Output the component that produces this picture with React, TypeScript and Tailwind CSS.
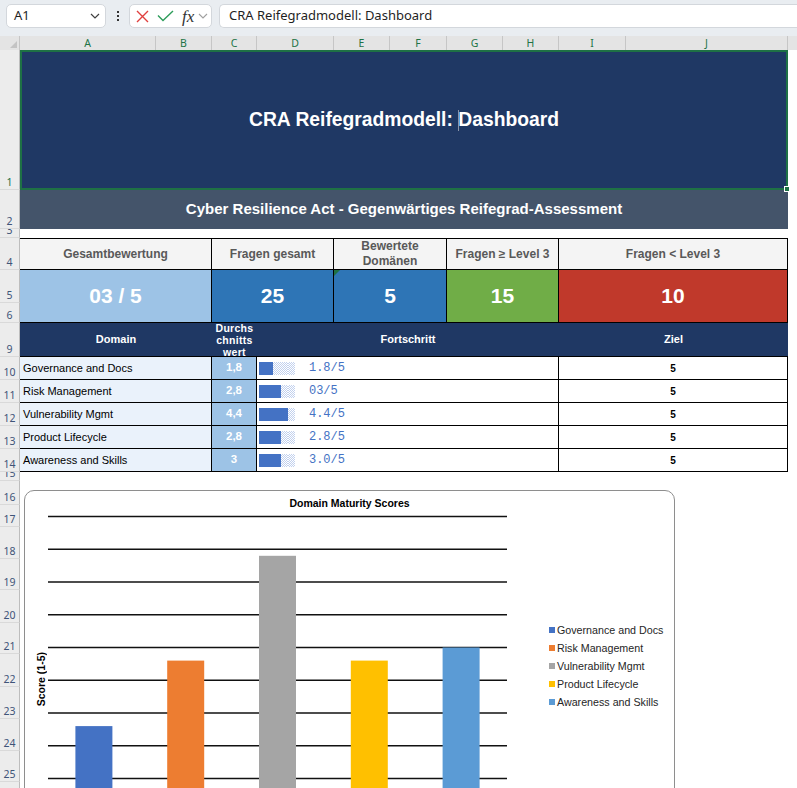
import React from "react";

type Domain = {
  name: string;
  avg: string;
  filled: number;
  label: string;
  score: number;
  color: string;
};

const domains: Domain[] = [
  { name: "Governance and Docs", avg: "1,8", filled: 2, label: "1.8/5", score: 1.8, color: "#4472c4" },
  { name: "Risk Management", avg: "2,8", filled: 3, label: "03/5", score: 2.8, color: "#ed7d31" },
  { name: "Vulnerability Mgmt", avg: "4,4", filled: 4, label: "4.4/5", score: 4.4, color: "#a5a5a5" },
  { name: "Product Lifecycle", avg: "2,8", filled: 3, label: "2.8/5", score: 2.8, color: "#ffc000" },
  { name: "Awareness and Skills", avg: "3", filled: 3, label: "3.0/5", score: 3.0, color: "#5b9bd5" },
];

const columns: [string, string][] = [
  ["A", "w-[136px]"],
  ["B", "w-[56px]"],
  ["C", "w-[45px]"],
  ["D", "w-[77px]"],
  ["E", "w-[56px]"],
  ["F", "w-[57px]"],
  ["G", "w-[56px]"],
  ["H", "w-[56px]"],
  ["I", "w-[67px]"],
  ["J", "w-[162px]"],
];

// row number + height class, rows 7 and 8 are hidden
const rowHeads: [string, string][] = [
  ["1", "h-[140px]"],
  ["2", "h-[39px]"],
  ["3", "h-[9px]"],
  ["4", "h-[32px]"],
  ["5", "h-[33px]"],
  ["6", "h-[20px]"],
  ["9", "h-[34px]"],
  ["10", "h-[23px]"],
  ["11", "h-[23px]"],
  ["12", "h-[23px]"],
  ["13", "h-[23px]"],
  ["14", "h-[23px]"],
  ["15", "h-[9px]"],
  ["16", "h-[24px]"],
  ["17", "h-[22px]"],
  ["18", "h-[32px]"],
  ["19", "h-[31px]"],
  ["20", "h-[33px]"],
  ["21", "h-[31px]"],
  ["22", "h-[33px]"],
  ["23", "h-[32px]"],
  ["24", "h-[32px]"],
  ["25", "h-[31px]"],
  ["26", "h-[32px]"],
];

function FormulaBar() {
  return (
    <div className="flex h-[36px] items-start bg-[#e9edf1] pt-[4px] pl-[6px] font-['Noto_Sans',sans-serif] text-[13px] text-[#1f1f1f]">
      <div className="flex h-[24px] w-[100px] items-center justify-between rounded-[5px] border border-[#d3d7dc] bg-white pr-[5px] pl-[7px]">
        <span>A1</span>
        <svg width="10" height="6" viewBox="0 0 10 6">
          <path d="M1 1l4 4 4-4" fill="none" stroke="#404040" strokeWidth="1.2" />
        </svg>
      </div>
      <div className="flex h-[24px] w-[23px] flex-col items-center justify-center gap-[2px]">
        <span className="h-[2px] w-[2px] bg-[#333]" />
        <span className="h-[2px] w-[2px] bg-[#333]" />
        <span className="h-[2px] w-[2px] bg-[#333]" />
      </div>
      <div className="flex h-[24px] w-[83px] items-center rounded-[5px] border border-[#d3d7dc] bg-white pl-[6px]">
        <svg width="13" height="13" viewBox="0 0 13 13">
          <path d="M1 1l11 11M12 1L1 12" stroke="#e0403f" strokeWidth="1.4" />
        </svg>
        <svg className="ml-[8px]" width="17" height="12" viewBox="0 0 17 12">
          <path d="M1 5.5l5 5L16 1" fill="none" stroke="#2e9d5b" strokeWidth="1.4" />
        </svg>
        <span className="ml-[8px] font-['Liberation_Serif',serif] text-[17px] leading-none text-[#333] italic">fx</span>
        <svg className="ml-[4px]" width="10" height="6" viewBox="0 0 10 6">
          <path d="M1 1l4 4 4-4" fill="none" stroke="#a0a0a0" strokeWidth="1.1" />
        </svg>
      </div>
      <div className="ml-[7px] flex h-[24px] flex-1 items-center rounded-l-[5px] border border-r-0 border-[#d3d7dc] bg-white pl-[9px]">
        CRA Reifegradmodell: Dashboard
      </div>
    </div>
  );
}

function ColumnHeaders() {
  return (
    <div className="flex h-[14px] bg-[#e4e4e4] font-['Noto_Sans',sans-serif] text-[10.5px] leading-[14px]">
      <div className="relative w-[20px] border-r border-[#c6c6c6]">
        <span className="absolute right-[2px] bottom-[2px] h-0 w-0 border-b-[7px] border-l-[7px] border-b-[#c4c4c4] border-l-transparent" />
      </div>
      {columns.map(([letter, w]) => (
        <div key={letter} className={`${w} border-r border-[#c6c6c6] text-center text-[#217346]`}>
          {letter}
        </div>
      ))}
      <div className="flex-1" />
    </div>
  );
}

function RowHeaders() {
  return (
    <div className="w-[20px] shrink-0 font-['Noto_Sans',sans-serif] text-[10.5px] leading-[12px]">
      {rowHeads.map(([n, h]) => (
        <div
          key={n}
          className={`${h} flex items-end justify-center overflow-hidden border-r border-b border-r-[#bdbdbd] border-b-[#d9d9d9] bg-[#ececec] pb-[1px] ${
            n === "1" ? "text-[#1e7145]" : "text-[#3f5478]"
          }`}
        >
          {n}
        </div>
      ))}
    </div>
  );
}

function Kpis() {
  const labels = "flex items-center justify-center border-t border-r border-b border-black bg-[#f4f4f4] text-center text-[12px] leading-[15px] font-bold text-[#595959]";
  const values = "flex items-center justify-center border-r border-b border-black text-[21px] font-bold text-white";
  return (
    <div className="grid w-[768px] grid-cols-[192px_122px_113px_112px_229px] grid-rows-[32px_53px]">
      <div className={labels}>Gesamtbewertung</div>
      <div className={labels}>Fragen gesamt</div>
      <div className={labels}>
        Bewertete
        <br />
        Domänen
      </div>
      <div className={labels}>Fragen ≥ Level 3</div>
      <div className={labels}>Fragen &lt; Level 3</div>
      <div className={`${values} bg-[#9dc3e6]`}>03 / 5</div>
      <div className={`${values} bg-[#2e75b6]`}>25</div>
      <div className={`${values} relative bg-[#2e75b6]`}>
        <span className="absolute top-0 left-0 h-0 w-0 border-t-[6px] border-r-[6px] border-t-[#1e7145] border-r-transparent" />
        5
      </div>
      <div className={`${values} bg-[#70ad47]`}>15</div>
      <div className={`${values} bg-[#c0392b]`}>10</div>
    </div>
  );
}

function DataBar({ filled }: { filled: number }) {
  return (
    <div className="flex h-[13px]">
      {[0, 1, 2, 3, 4].map((i) => (
        <span
          key={i}
          className={
            i < filled
              ? "h-full w-[7.2px] bg-[#4472c4]"
              : "h-full w-[7.2px] bg-[repeating-conic-gradient(#c2d1ee_0%_25%,#ffffff_0%_50%)] bg-size-[2px_2px]"
          }
        />
      ))}
    </div>
  );
}

function DomainTable() {
  return (
    <div className="w-[768px]">
      <div className="grid h-[34px] grid-cols-[192px_45px_302px_229px] border-b border-black bg-[#1f3864] text-[11px] font-bold text-white">
        <div className="flex items-center justify-center">Domain</div>
        <div className="flex flex-col items-center justify-center overflow-hidden text-[10.5px] leading-[12px] tracking-[0.3px]">
          <span>Durchs</span>
          <span>chnitts</span>
          <span>wert</span>
        </div>
        <div className="flex items-center justify-center">Fortschritt</div>
        <div className="flex items-center justify-center">Ziel</div>
      </div>
      {domains.map((d) => (
        <div key={d.name} className="grid h-[23px] grid-cols-[192px_45px_302px_229px] border-b border-black text-[11px]">
          <div className="flex items-center border-r border-black bg-[#eaf2fb] pl-[3px] text-black">{d.name}</div>
          <div className="flex items-center justify-center border-r border-black bg-[#9dc3e6] text-[11.5px] font-bold text-white">
            {d.avg}
          </div>
          <div className="flex items-center border-r border-black pl-[2px]">
            <DataBar filled={d.filled} />
            <span className="ml-[14px] font-['Liberation_Mono',monospace] text-[12px] text-[#4472c4]">{d.label}</span>
          </div>
          <div className="flex items-center justify-center border-r border-black text-[10px] font-bold text-black">5</div>
        </div>
      ))}
    </div>
  );
}

function MaturityChart() {
  const step = 32.75;
  const unit = 65.5;
  const base = 329;
  return (
    <div className="h-[330px] w-[651px] rounded-[10px] border border-[#8e8e8e] bg-white">
      <div className="h-[23.5px] pt-[5px] text-center text-[10.5px] leading-[14px] font-bold text-black">
        Domain Maturity Scores
      </div>
      <div className="flex items-start">
        <div className="flex h-[330px] w-[23px] items-center justify-end">
          <span className="rotate-180 text-[10.5px] leading-[14px] font-bold text-black [writing-mode:vertical-rl]">
            Score (1-5)
          </span>
        </div>
        <svg width="459" height="330" viewBox="0 0 459 330">
          {Array.from({ length: 11 }, (_, k) => (
            <line key={k} x1="0" x2="459" y1={1.5 + k * step} y2={1.5 + k * step} stroke="#111" strokeWidth="1.5" />
          ))}
          {domains.map((d, i) => (
            <rect key={d.name} x={45.9 + i * 91.8 - 18.5} y={base - d.score * unit} width="37" height={d.score * unit} fill={d.color} />
          ))}
        </svg>
        <div className="mt-[106px] ml-[42px] text-[10.7px] leading-[18.2px] text-[#262626]">
          {domains.map((d) => (
            <div key={d.name} className="flex items-center gap-[2px]">
              <span className="h-[6px] w-[6px]" style={{ backgroundColor: d.color }} />
              {d.name}
            </div>
          ))}
        </div>
      </div>
    </div>
  );
}

export default function App() {
  return (
    <div className="h-[788px] w-[797px] overflow-hidden bg-white font-['Liberation_Sans',Arial,sans-serif]">
      <FormulaBar />
      <ColumnHeaders />
      <div className="flex">
        <RowHeaders />
        <div className="w-[777px]">
          <div className="relative flex h-[140px] w-[768px] items-center justify-center border-2 border-[#1e7145] bg-[#1f3864] text-[19.3px] font-bold text-white">
            <span>
              CRA Reifegradmodell: <span className="-mr-px inline-block h-[21px] w-px bg-[#8a94a8] align-middle" />
              Dashboard
            </span>
            <span className="absolute -right-[4px] -bottom-[4px] h-[6px] w-[6px] border border-white bg-[#1e7145]" />
          </div>
          <div className="flex h-[39px] w-[768px] items-center justify-center bg-[#44546a] text-[15px] font-bold text-white">
            Cyber Resilience Act - Gegenwärtiges Reifegrad-Assessment
          </div>
          <div className="h-[9px]" />
          <Kpis />
          <DomainTable />
          <div className="pt-[18px] pl-[4px]">
            <MaturityChart />
          </div>
        </div>
      </div>
    </div>
  );
}
